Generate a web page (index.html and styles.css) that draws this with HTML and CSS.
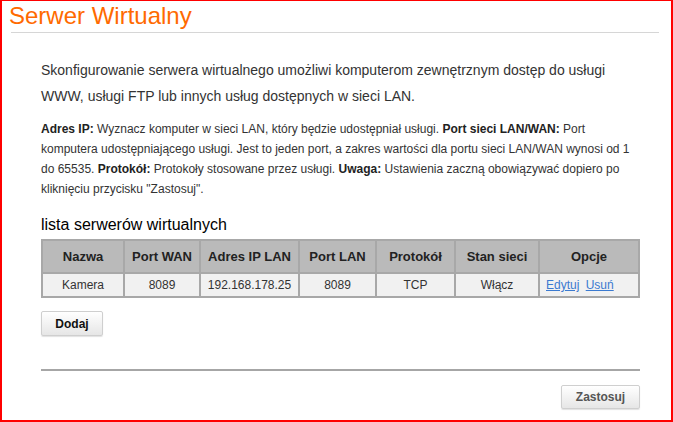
FILE: index.html
```html
<!DOCTYPE html>
<html lang="pl">
<head>
    <meta charset="UTF-8">
    <meta name="viewport" content="width=device-width, initial-scale=1.0">
    <title>Serwer Wirtualny</title>
    <link rel="stylesheet" href="styles.css">
</head>
<body>

    <div class="frame">
        <h1 class="title">Serwer Wirtualny</h1>

        <div class="content">
            <p class="intro">Skonfigurowanie serwera wirtualnego umożliwi komputerom zewnętrznym dostęp do usługi WWW, usługi FTP lub innych usług dostępnych w sieci LAN.</p>

            <p class="help"><b>Adres IP:</b> Wyznacz komputer w sieci LAN, który będzie udostępniał usługi. <b>Port sieci LAN/WAN:</b> Port komputera udostępniającego usługi. Jest to jeden port, a zakres wartości dla portu sieci LAN/WAN wynosi od 1 do 65535. <b>Protokół:</b> Protokoły stosowane przez usługi. <b>Uwaga:</b> Ustawienia zaczną obowiązywać dopiero po kliknięciu przycisku "Zastosuj".</p>

            <h2 class="list-title">lista serwerów wirtualnych</h2>

            <table class="servers">
                <colgroup>
                    <col class="c-name">
                    <col class="c-wan">
                    <col class="c-ip">
                    <col class="c-lan">
                    <col class="c-proto">
                    <col class="c-state">
                    <col class="c-opts">
                </colgroup>
                <tr>
                    <th>Nazwa</th>
                    <th>Port WAN</th>
                    <th>Adres IP LAN</th>
                    <th>Port LAN</th>
                    <th>Protokół</th>
                    <th>Stan sieci</th>
                    <th>Opcje</th>
                </tr>
                <tr>
                    <td>Kamera</td>
                    <td>8089</td>
                    <td>192.168.178.25</td>
                    <td>8089</td>
                    <td>TCP</td>
                    <td>Włącz</td>
                    <td class="options"><a href="#">Edytuj</a> <a href="#">Usuń</a></td>
                </tr>
            </table>

            <button class="btn add">Dodaj</button>

            <div class="footer">
                <button class="btn apply">Zastosuj</button>
            </div>
        </div>
    </div>

</body>
</html>
```

FILE: styles.css
```css
html, body {
    margin: 0;
    height: 100%;
}
body {
    font-family: Arial, "Liberation Sans", sans-serif;
    background: #fff;
    color: #333;
}
.frame {
    box-sizing: border-box;
    height: 422px;
    border: 2px solid #f00;
    border-top-width: 1px;
}
.title {
    margin: 0 12px 0 9px;
    padding: 1px 0 2px;
    font-size: 24px;
    line-height: 28px;
    font-weight: normal;
    color: #ff6a00;
    text-indent: -2px;
    border-bottom: 1px solid #d6d6d6;
}
.content {
    margin: 0 31px 0 39px;
}
.intro {
    margin: 24px 0 0;
    font-size: 14px;
    line-height: 26px;
}
.help {
    margin: 10px 0 0;
    font-size: 12px;
    line-height: 20px;
}
.help b {
    color: #222;
}
.list-title {
    margin: 16px 0 4px;
    font-size: 16px;
    line-height: 20px;
    font-weight: normal;
    color: #000;
}
.servers {
    width: 597px;
    table-layout: fixed;
    border-collapse: collapse;
    text-align: center;
}
.c-name { width: 82px; }
.c-wan { width: 76px; }
.c-ip { width: 99px; }
.c-lan { width: 77px; }
.c-proto { width: 79px; }
.c-state { width: 84px; }
.c-opts { width: 100px; }
.servers th {
    height: 31px;
    padding: 0 4px;
    font-size: 13px;
    background: #bababa;
    color: #222;
    border: 2px solid #a8a8a8;
}
.servers td {
    height: 22px;
    padding: 0 4px;
    font-size: 12px;
    background: #f1f1f1;
    border: 2px solid #a8a8a8;
}
.options {
    text-align: left;
}
.servers .options {
    padding-left: 6px;
}
.options a {
    color: #3b7ad0;
    margin-right: 3px;
}
.btn {
    font-family: Arial, "Liberation Sans", sans-serif;
    font-size: 12px;
    font-weight: bold;
    background: linear-gradient(#ffffff, #e6e6e6);
    border: 1px solid #cfcfcf;
    border-radius: 2px;
    box-shadow: 0 1px 1px rgba(0, 0, 0, 0.12);
    cursor: pointer;
}
.add {
    margin-top: 13px;
    width: 62px;
    height: 25px;
    color: #111;
}
.footer {
    margin-top: 33px;
    padding-top: 14px;
    border-top: 2px solid #a6a6a6;
    display: flex;
    justify-content: flex-end;
}
.apply {
    width: 79px;
    height: 24px;
    color: #555;
}
```
